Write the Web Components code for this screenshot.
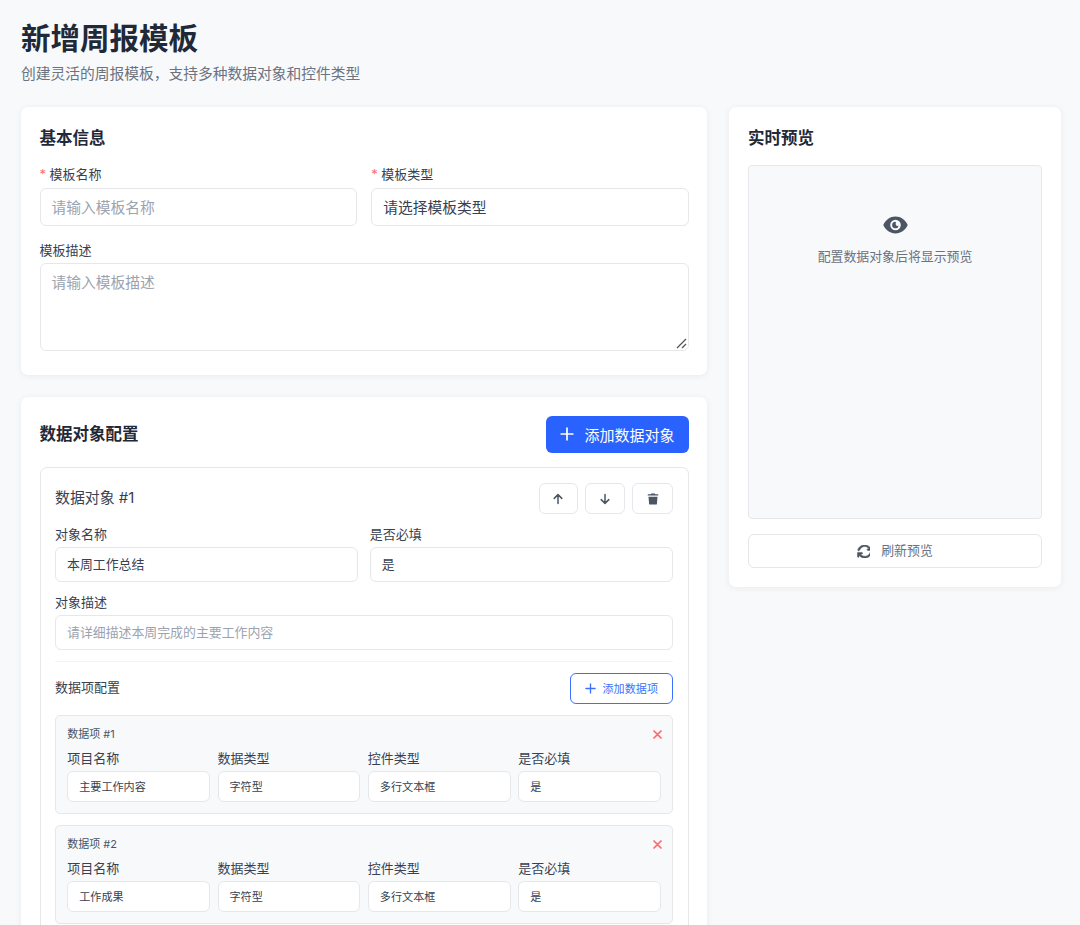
<!DOCTYPE html>
<html lang="zh-CN"><head><meta charset="utf-8"><title>新增周报模板</title>
<style>
html,body{margin:0;height:925px;overflow:hidden;background:#f8f9fb}
body{font-family:Inter,"Noto Sans CJK SC",sans-serif;color:#1f2937}
</style></head><body>
<wk-page>
  <wk-header slot="header" heading="新增周报模板" sub="创建灵活的周报模板，支持多种数据对象和控件类型"></wk-header>
  <div slot="main">
    <wk-card heading="基本信息" style="height:268px">
      <wk-row>
        <wk-field label="模板名称" required><wk-input placeholder="请输入模板名称"></wk-input></wk-field>
        <wk-field label="模板类型" required><wk-input value="请选择模板类型"></wk-input></wk-field>
      </wk-row>
      <wk-field label="模板描述" style="margin-top:15px;--label-gap:4px"><wk-input placeholder="请输入模板描述" multiline></wk-input></wk-field>
    </wk-card>
    <wk-card heading="数据对象配置" style="margin-top:22px" action>
      <wk-button slot="action" kind="primary" icon="plus">添加数据对象</wk-button>
      <wk-object heading="数据对象 #1">
        <wk-button slot="tools" kind="tool" icon="up"></wk-button>
        <wk-button slot="tools" kind="tool" icon="down"></wk-button>
        <wk-button slot="tools" kind="tool" icon="trash" style="width:41px"></wk-button>
        <wk-row slot="fields" gap="11.5">
          <wk-field size="sm" label="对象名称"><wk-input size="sm" value="本周工作总结"></wk-input></wk-field>
          <wk-field size="sm" label="是否必填"><wk-input size="sm" value="是"></wk-input></wk-field>
        </wk-row>
        <wk-field slot="fields" size="sm" label="对象描述" style="margin-top:11px"><wk-input size="sm" placeholder="请详细描述本周完成的主要工作内容"></wk-input></wk-field>
        <wk-button slot="add" kind="outline" icon="plus">添加数据项</wk-button>
        <wk-item heading="数据项 #1" name="主要工作内容"></wk-item>
        <wk-item heading="数据项 #2" name="工作成果"></wk-item>
      </wk-object>
    </wk-card>
  </div>
  <wk-card slot="side" heading="实时预览" style="padding-left:19px;padding-right:19px">
    <wk-preview>配置数据对象后将显示预览</wk-preview>
    <wk-button kind="block" icon="refresh">刷新预览</wk-button>
  </wk-card>
</wk-page>
<script>
const ICONS={
 plus:'<svg viewBox="0 0 14 14"><path d="M7 1.2v11.6M1.2 7h11.6" fill="none" stroke="currentColor" stroke-width="1.7" stroke-linecap="round"/></svg>',
 up:'<svg viewBox="0 0 12 12"><path d="M6 10.6V1.8M2.2 5.4 6 1.6l3.8 3.8" fill="none" stroke="currentColor" stroke-width="1.5" stroke-linecap="round" stroke-linejoin="round"/></svg>',
 down:'<svg viewBox="0 0 12 12"><path d="M6 1.4v8.8M2.2 6.600 6 10.400l3.800-3.800" fill="none" stroke="currentColor" stroke-width="1.5" stroke-linecap="round" stroke-linejoin="round"/></svg>',
 trash:'<svg viewBox="0 0 12 12"><path fill="currentColor" d="M4.2.4h3.600l.4.9h2.600c.3 0 .5.2.5.5v.4c0 .2-.2.4-.4.4H1.100a.4.4 0 0 1-.4-.4v-.4c0-.3.2-.5.5-.5h2.600zM1.500 3.700h9l-.6 7.200c0 .4-.4.7-.8.7H2.900c-.4 0-.8-.3-.8-.7z"/></svg>',
 refresh:'<svg viewBox="0 0 512 512" style="color:#4b5563"><path fill="currentColor" stroke="currentColor" stroke-width="20" d="M105 203c10-29 27-56 50-79 82-82 215-82 297 0l25 26h-50c-18 0-32 14-32 32s14 32 32 32h128c18 0 32-14 32-32V54c0-18-14-32-32-32s-32 14-32 32v51l-26-26C384-33 211-33 99 79 68 110 45 147 31 186c-6 17 3 35 20 41s35-3 41-20zM39 289c-5 2-9 4-13 8-4 4-7 9-8 14-1 2-1 5-1 8v137c0 18 14 32 32 32s32-14 32-32v-51l26 26c112 112 285 112 397 0 31-31 54-68 68-107 6-17-3-35-20-41s-35 3-41 20c-10 29-27 56-50 79-82 82-215 82-297 0l-25-26h50c18 0 32-14 32-32s-14-32-32-32H49c-3 0-7 0-10 1z"/></svg>'
};
function def(name,render){customElements.define(name,class extends HTMLElement{connectedCallback(){if(this.shadowRoot)return;this.attachShadow({mode:'open'}).innerHTML=render(this)}})}
def('wk-page',()=>`<style>:host{display:block;box-sizing:border-box;padding:0 19px 0 21px}
.g{display:grid;grid-template-columns:686px 332px;column-gap:22px;align-items:start;margin-top:21px}</style>
<slot name="header"></slot><div class="g"><div><slot name="main"></slot></div><div><slot name="side"></slot></div></div>`);
def('wk-header',e=>`<style>:host{display:block;padding-top:18px}
h1{margin:0;font-size:29.5px;line-height:40px;font-weight:700;color:#1f2937}
p{margin:4px 0 0;font-size:14.75px;line-height:24px;color:#6b7280}</style>
<h1>${e.getAttribute('heading')}</h1><p>${e.getAttribute('sub')}</p>`);
def('wk-card',e=>`<style>:host{display:block;box-sizing:border-box;background:#fff;border-radius:7px;padding:19px 18.5px;box-shadow:0 1px 6px rgba(31,41,55,.07)}
.h{display:flex;justify-content:space-between;align-items:center;margin-bottom:${e.hasAttribute('action')?'14px':'15px'};min-height:24px}
h2{margin:0;font-size:16.5px;line-height:24px;font-weight:700;color:#1f2937;${e.hasAttribute('action')?'padding-bottom:2px':''}}</style>
<div class="h"><h2>${e.getAttribute('heading')}</h2><slot name="action"></slot></div><slot></slot>`);
def('wk-row',e=>`<style>:host{display:grid;grid-template-columns:1fr 1fr;column-gap:${e.getAttribute('gap')||14.5}px}</style><slot></slot>`);
def('wk-field',e=>{const s=e.getAttribute('size')==='sm';return `<style>:host{display:block}
label{display:block;font-size:13px;line-height:18px;margin-bottom:var(--label-gap,${s?'4px':'5px'});color:#374151}
i{font-style:normal;color:#f87171;margin-right:3.5px}</style>
<label>${e.hasAttribute('required')?'<i>*</i>':''}${e.getAttribute('label')}</label><slot></slot>`});
def('wk-input',e=>{const sz=e.getAttribute('size'),ml=e.hasAttribute('multiline'),ph=e.getAttribute('placeholder'),v=e.getAttribute('value');
const cfg=sz==='xs'?{h:31,f:11.1,p:11,l:31}:sz==='sm'?{h:35,f:12.9,p:11,l:33}:{h:38,f:14.75,p:11,l:38};
return `<style>:host{display:block;position:relative}
.b{box-sizing:border-box;background:#fff;border:1px solid #e5e7eb;border-radius:6px;height:${ml?88:cfg.h}px;padding:${ml?'8px':'0'} ${cfg.p}px;font-size:${cfg.f}px;line-height:${ml?'22px':cfg.l+'px'};color:${ph?'#9ca3af':'#374151'}}
svg{position:absolute;right:2px;bottom:2px;width:11px;height:11px}</style>
<div class="b">${ph||v}</div>${ml?'<svg viewBox="0 0 11 11"><path d="M1 10 10 1M6 10l4-4" stroke="#555" stroke-width="1.3" fill="none"/></svg>':''}`});
def('wk-button',e=>{const k=e.getAttribute('kind'),ic=ICONS[e.getAttribute('icon')]||'';
const st={primary:'height:37px;padding:0 14px 1px;gap:10px;background:#2962ff;color:#fff;font-size:15px;border:0;border-radius:6px;--i:14px',
tool:'height:31px;width:100%;justify-content:center;background:#fff;color:#4b5563;border:1px solid #e5e7eb;border-radius:6px;--i:12px',
outline:'height:31px;padding:0 14px 1px;gap:7px;background:#fff;color:#3d70ff;font-size:11.1px;border:1px solid #3d70ff;border-radius:6px;--i:11px',
block:'height:34px;justify-content:center;gap:11px;background:#fff;color:#6b7280;font-size:12.9px;line-height:18px;border:1px solid #e5e7eb;border-radius:6px;--i:13px'}[k];
return `<style>:host{display:${k==='block'?'block':'inline-block'};${k==='tool'?'width:39.2px':''}}
div{box-sizing:border-box;display:flex;align-items:center;${st}}
span{width:var(--i);height:var(--i);display:block;flex:none}
svg{display:block;width:100%;height:100%}</style><div><span>${ic}</span><slot></slot></div>`});
def('wk-object',e=>`<style>:host{display:block;box-sizing:border-box;border:1px solid #e5e7eb;border-radius:7px;padding:15px 14.5px}
.t{display:flex;justify-content:space-between;align-items:center;height:31px;margin-bottom:11px}
.n{font-size:14.9px;line-height:20px;padding-bottom:2px;color:#374151}.tools{display:flex;gap:7.5px}
.c{display:flex;justify-content:space-between;align-items:center;margin-top:11px;padding-top:11px;border-top:1px solid #f3f4f6;margin-bottom:11px}
.l{font-size:13px;line-height:18px;padding-bottom:3px;color:#374151}</style>
<div class="t"><div class="n">${e.getAttribute('heading')}</div><div class="tools"><slot name="tools"></slot></div></div>
<slot name="fields"></slot><div class="c"><div class="l">数据项配置</div><slot name="add"></slot></div><slot></slot>`);
def('wk-item',e=>`<style>:host{display:block;box-sizing:border-box;background:#f8f9fb;border:1px solid #e5e7eb;border-radius:5px;padding:9px 11px 10px 11.2px;margin-bottom:11.5px;height:98.5px}
.t{display:flex;justify-content:space-between;align-items:center;height:18px;font-size:11px;line-height:18px;color:#4b5563;margin-bottom:6px}
svg{width:9px;height:9px;margin-right:-.5px}
.g{display:grid;grid-template-columns:repeat(4,1fr);column-gap:7.5px}
label{display:block;font-size:13px;line-height:18px;color:#374151;margin-bottom:4px}</style>
<div class="t"><span>${e.getAttribute('heading')}</span><svg viewBox="0 0 9 9"><path d="M1 1l7 7M8 1 1 8" stroke="#fb6b6b" stroke-width="1.7" fill="none" stroke-linecap="round"/></svg></div>
<div class="g">${[['项目名称',e.getAttribute('name')],['数据类型','字符型'],['控件类型','多行文本框'],['是否必填','是']].map(([a,b])=>`<div><label>${a}</label><wk-input size="xs" value="${b}"></wk-input></div>`).join('')}</div>`);
def('wk-preview',()=>`<style>:host{display:block;box-sizing:border-box;height:354px;background:#f8f9fb;border:1px solid #e5e7eb;border-radius:4px;padding-top:49px;text-align:center;font-size:12.9px;line-height:20px;color:#6b7280;margin-bottom:15px}
svg{display:block;margin:0 auto 12px;width:25px;height:20px;color:#4b5563}</style>
<svg viewBox="0 0 25 20"><path fill="currentColor" fill-rule="evenodd" d="M12.500 1.500C7 1.500 2.800 5 .6 9.200c-.3.5-.3 1.100 0 1.600C2.800 15 7 18.500 12.500 18.500s9.700-3.500 11.900-7.700c.3-.5.3-1.100 0-1.600C22.200 5 18 1.500 12.500 1.500zm0 3.200a5.300 5.300 0 1 1 0 10.600 5.300 5.300 0 0 1 0-10.600z"/><path fill="currentColor" d="M12.500 6.700a3.300 3.300 0 1 0 3.200 3.900 2 2 0 0 1-2.900-2.500c.2-.5.2-1-.3-1.400z"/></svg><slot></slot>`);
</script></body></html>
